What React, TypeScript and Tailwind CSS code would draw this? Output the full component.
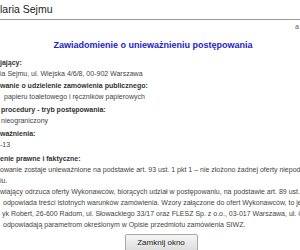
import React from 'react';

const Label: React.FC<{ children: React.ReactNode; className?: string }> = ({ children, className = '' }) => (
  <div className={`font-bold text-[#333] whitespace-nowrap ${className}`}>{children}</div>
);

const Line: React.FC<{ children: React.ReactNode; className?: string }> = ({ children, className = '' }) => (
  <div className={`text-[#444] whitespace-nowrap ${className}`}>{children}</div>
);

const App: React.FC = () => {
  return (
    <div className="w-[300px] h-[250px] overflow-hidden bg-white font-['Liberation_Sans',Arial,sans-serif]">
      {/* page header, cut at the left like the original window */}
      <div className="h-[20px] border-b border-[#9a9a9a] text-[10.5px] leading-[19px] text-[#222] whitespace-nowrap">
        laria Sejmu
      </div>
      <div className="h-[14px] flex text-[7px] leading-[14px] text-[#555]">
        <span className="ml-[295px]">a</span>
      </div>

      <h1 className="mt-[5px] pl-[6px] text-center text-[9px] leading-[12px] font-bold text-[#2323c8] whitespace-nowrap">
        Zawiadomienie o unieważnieniu postępowania
      </h1>

      <div className="mt-[6px] flex flex-col text-[7px] leading-[11px]">
        <Label>jający:</Label>
        <Line>ia Sejmu, ul. Wiejska 4/6/8, 00-902 Warszawa</Line>

        <Label className="mt-[1px]">wanie o udzielenie zamówienia publicznego:</Label>
        <Line className="pl-[4px]">papieru toaletowego i ręczników papierowych</Line>

        <Label className="mt-[2px] pl-[1px]">procedury - tryb postępowania:</Label>
        <Line className="pl-[1px]">nieograniczony</Line>

        <Label className="mt-[2px]">ważnienia:</Label>
        <Line>-13</Line>

        <Label className="mt-[3px]">enie prawne i faktyczne:</Label>
        <Line>owanie zostaje unieważnione na podstawie art. 93 ust. 1 pkt 1 – nie złożono żadnej oferty niepodlegającej odrzuceniu</Line>
        <Line>iu.</Line>
        <Line>wiający odrzuca oferty Wykonawców, biorących udział w postępowaniu, na podstawie art. 89 ust. 1 pkt 2</Line>
        <Line className="pl-[3px]">odpowiada treści istotnych warunków zamówienia. Wzory załączone do ofert Wykonawców, to jest</Line>
        <Line className="pl-[2px]">yk Robert, 26-600 Radom, ul. Słowackiego 33/17 oraz FLESZ Sp. z o.o., 03-017 Warszawa, ul. Ciechanowska</Line>
        <Line className="pl-[3px]">odpowiadają parametrom określonym w Opisie przedmiotu zamówienia SIWZ.</Line>
      </div>

      <div className="mt-[4px] flex justify-center pl-[22px]">
        <button className="h-[18px] w-[73px] rounded-[2px] border border-[#a8a8a8] bg-gradient-to-b from-[#f6f6f6] to-[#dcdcdc] text-[8px] leading-[16px] text-[#222]">
          Zamknij okno
        </button>
      </div>
    </div>
  );
};

export default App;
